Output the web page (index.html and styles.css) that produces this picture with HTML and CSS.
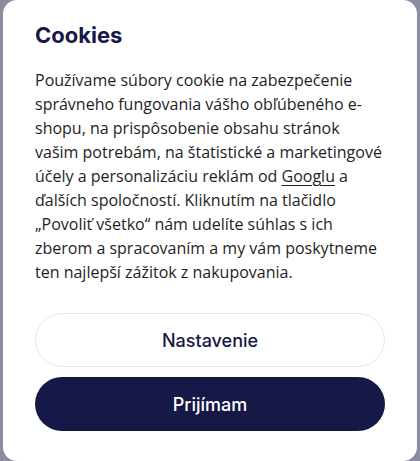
FILE: index.html
```html
<!DOCTYPE html>
<html lang="sk">
<head>
    <meta charset="UTF-8">
    <meta name="viewport" content="width=device-width, initial-scale=1.0">
    <title>Cookies</title>
    <link rel="stylesheet" href="styles.css">
</head>
<body>

    <div class="cookie-card">
        <h1 class="cookie-title">Cookies</h1>
        <p class="cookie-text">
            Používame súbory cookie na zabezpečenie správneho fungovania vášho obľúbeného e-shopu,
            na prispôsobenie obsahu stránok vašim potrebám, na štatistické a marketingové účely
            a personalizáciu reklám od <a href="#" class="cookie-link">Googlu</a> a ďalších
            spoločností. Kliknutím na tlačidlo „Povoliť všetko“ nám udelíte súhlas s ich zberom
            a spracovaním a my vám poskytneme ten najlepší zážitok z nakupovania.
        </p>
        <div class="cookie-buttons">
            <button class="btn btn-settings">Nastavenie</button>
            <button class="btn btn-accept">Prijímam</button>
        </div>
    </div>

</body>
</html>
```

FILE: styles.css
```css
html, body {
    height: 100%;
}

body {
    margin: 0;
    background: #8b8c9f;
    font-family: "Open Sans", Arial, sans-serif;
    overflow: hidden;
}

.cookie-card {
    box-sizing: border-box;
    height: 100%;
    margin: 0 3px;
    background: white;
    border-radius: 14px;
    padding: 20px 32px 30px;
}

.cookie-title {
    margin: 0 0 18px;
    color: #161848;
    font-family: Inter, "Open Sans", sans-serif;
    font-size: 22px;
    font-weight: 700;
    line-height: 30px;
}

.cookie-text {
    margin: 0 0 29px;
    color: #1e1e24;
    font-size: 16px;
    line-height: 24px;
}

.cookie-link {
    color: inherit;
    text-decoration: underline;
    text-underline-offset: 3px;
}

.cookie-buttons {
    display: flex;
    flex-direction: column;
    gap: 10px;
}

.btn {
    height: 54px;
    border-radius: 27px;
    font-family: Inter, "Open Sans", sans-serif;
    font-size: 18px;
    font-weight: 500;
    cursor: pointer;
}

.btn-settings {
    background: white;
    border: 1px solid #e6e6ea;
    color: #161848;
}

.btn-accept {
    background: #161848;
    border: none;
    color: white;
}
```
